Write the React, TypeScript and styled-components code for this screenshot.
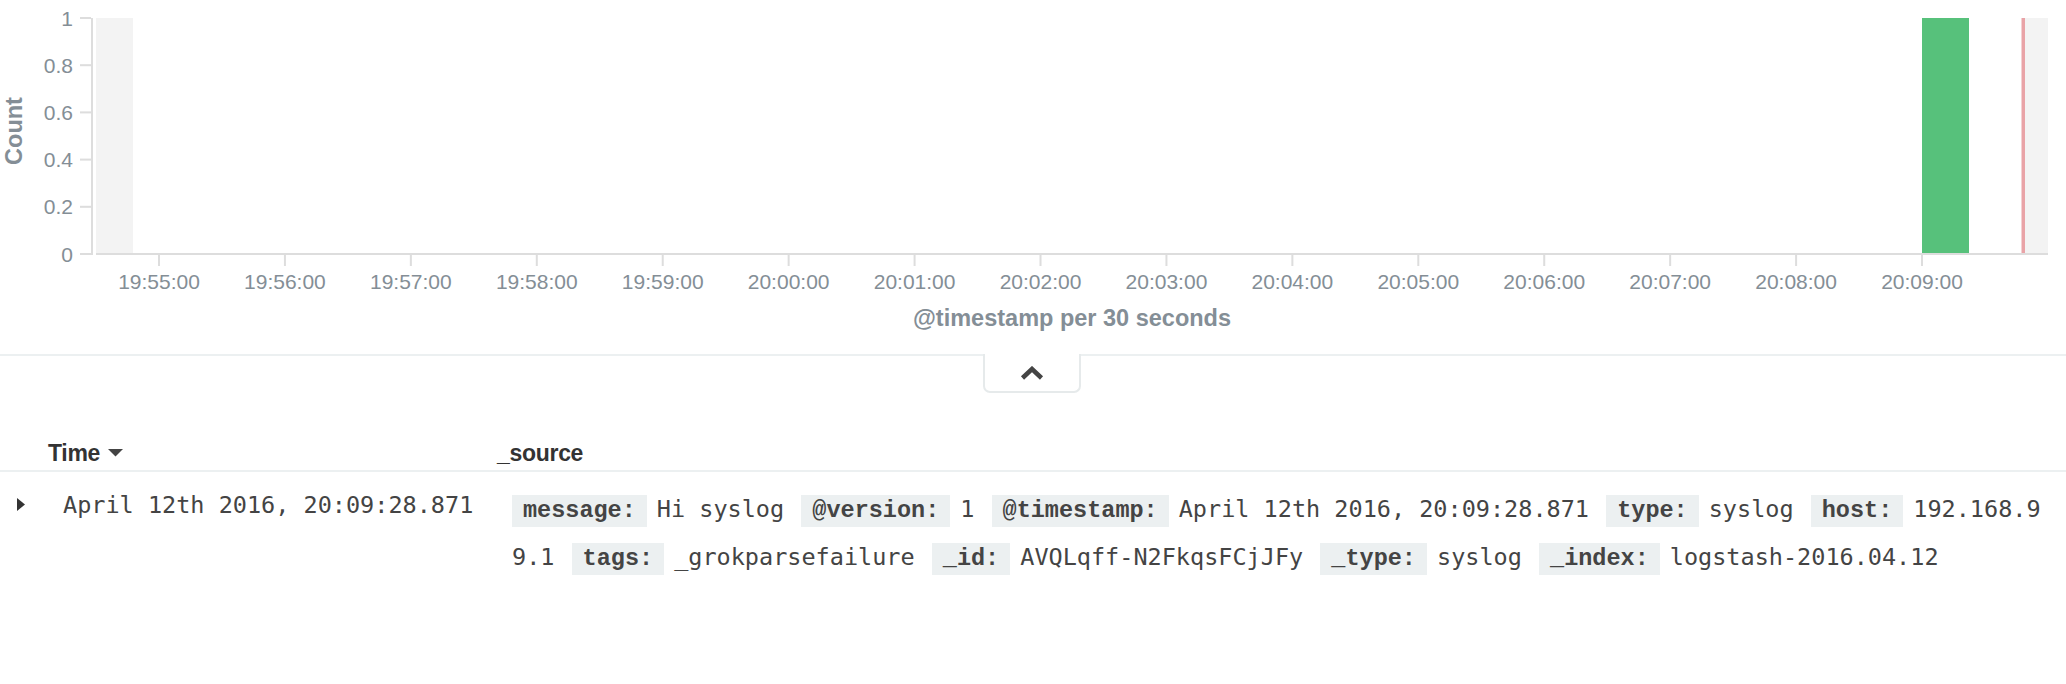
import React from 'react'
import styled, { createGlobalStyle } from 'styled-components'

const GlobalStyle = createGlobalStyle`
  html, body {
    margin: 0;
    padding: 0;
    background: #fff;
  }
  body {
    font-family: "Liberation Sans", Arial, sans-serif;
    color: #333;
  }
`

const Page = styled.div`
  width: 2066px;
  height: 684px;
  overflow: hidden;
`

/* ---------- histogram ---------- */

const Chart = styled.svg`
  display: block;
  width: 2066px;
  height: 354px;
  font-family: "Liberation Sans", Arial, sans-serif;
`

const TickLabel = styled.text`
  font-size: 21px;
  fill: #848e96;
`

const AxisTitle = styled.text`
  font-size: 23.5px;
  font-weight: 700;
  fill: #848e96;
`

const AXIS = '#dddddd'
const Y0 = 254
const Y1 = 18
const yFor = (v: number) => Y0 - v * (Y0 - Y1)
const xFor = (i: number) => 159 + i * 125.93

const yTicks = [1, 0.8, 0.6, 0.4, 0.2, 0]
const xTicks = [
  '19:55:00', '19:56:00', '19:57:00', '19:58:00', '19:59:00',
  '20:00:00', '20:01:00', '20:02:00', '20:03:00', '20:04:00',
  '20:05:00', '20:06:00', '20:07:00', '20:08:00', '20:09:00',
]

const Histogram = () => (
  <Chart viewBox="0 0 2066 354">
    {/* out of bounds shading */}
    <rect x={96} y={Y1} width={37} height={Y0 - Y1 - 1} fill="#f3f3f3" />
    <rect x={2025} y={Y1} width={23} height={Y0 - Y1 - 1} fill="#f3f3f3" />

    {/* data */}
    <rect x={1922} y={Y1} width={47} height={Y0 - Y1 - 1} fill="#57c17b" />
    <rect x={2021.5} y={Y1} width={3.5} height={Y0 - Y1 - 1} fill="#e9a3a7" />

    {/* y axis */}
    <rect x={91} y={Y1} width={2} height={Y0 - Y1 + 1} fill={AXIS} />
    {yTicks.map(v => (
      <g key={v}>
        <rect x={80} y={yFor(v) - 1} width={11} height={2} fill={AXIS} />
        <TickLabel x={73} y={yFor(v)} textAnchor="end" dominantBaseline="central">
          {v}
        </TickLabel>
      </g>
    ))}
    <AxisTitle
      x={0}
      y={0}
      textAnchor="middle"
      dominantBaseline="central"
      transform="translate(14 131) rotate(-90)"
    >
      Count
    </AxisTitle>

    {/* x axis */}
    <rect x={96} y={Y0 - 1} width={1952} height={2} fill={AXIS} />
    {xTicks.map((t, i) => (
      <g key={t}>
        <rect x={xFor(i) - 1} y={Y0} width={2} height={12} fill={AXIS} />
        <TickLabel x={xFor(i)} y={281} textAnchor="middle" dominantBaseline="central">
          {t}
        </TickLabel>
      </g>
    ))}
    <AxisTitle x={1072} y={318} textAnchor="middle" dominantBaseline="central">
      @timestamp per 30 seconds
    </AxisTitle>
  </Chart>
)

/* ---------- collapse toggle ---------- */

const Divider = styled.div`
  border-top: 2px solid #ecf0f1;
  display: flex;
  justify-content: center;
`

const ToggleTab = styled.button`
  margin: -2px 0 0 -2px;
  width: 98px;
  height: 39px;
  padding: 0;
  border: 2px solid #e6eaeb;
  border-top: none;
  border-radius: 0 0 7px 7px;
  background: #fff;
  display: flex;
  align-items: center;
  justify-content: center;
  cursor: pointer;
`

/* ---------- doc table ---------- */

const Table = styled.div`
  margin-top: 44px;
`

const HeaderRow = styled.div`
  display: grid;
  grid-template-columns: 48px 449px 1fr;
  border-bottom: 2px solid #ecf0f1;
  padding-bottom: 1px;
`

const HeaderCell = styled.div`
  display: flex;
  align-items: center;
  gap: 8px;
  font-size: 23px;
  line-height: 32px;
  font-weight: 700;
  color: #333;
  letter-spacing: -0.3px;
`

const DocRow = styled.div`
  display: grid;
  grid-template-columns: 48px 449px 1fr;
  color: #444;
  font-family: "DejaVu Sans Mono", "Liberation Mono", monospace;
  font-size: 23.5px;
`

const ToggleCell = styled.div`
  padding: 26px 0 0 17px;

  svg {
    display: block;
  }
`

const TimeCell = styled.div`
  padding: 9px 0 0 15px;
  line-height: 48px;
  white-space: nowrap;
`

const SourceCell = styled.dl`
  margin: 0;
  padding: 13px 16px 0 15px;
  line-height: 48px;
  word-break: break-all;
`

const Key = styled.dt`
  display: inline-block;
  font-family: "Liberation Mono", "DejaVu Sans Mono", monospace;
  font-weight: 700;
  font-size: 23.5px;
  line-height: 32px;
  padding: 0 11px;
  margin-right: 10px;
  background: #ecf0f1;
  color: #444;
  word-break: normal;
`

const Value = styled.dd`
  display: inline;
  margin: 0 3px 0 0;
`

const fields: [string, string][] = [
  ['message:', 'Hi syslog'],
  ['@version:', '1'],
  ['@timestamp:', 'April 12th 2016, 20:09:28.871'],
  ['type:', 'syslog'],
  ['host:', '192.168.99.1'],
  ['tags:', '_grokparsefailure'],
  ['_id:', 'AVQLqff-N2FkqsFCjJFy'],
  ['_type:', 'syslog'],
  ['_index:', 'logstash-2016.04.12'],
]

export default function App() {
  return (
    <Page>
      <GlobalStyle />
      <Histogram />
      <Divider>
        <ToggleTab aria-label="collapse chart">
          <svg width="24" height="14" viewBox="0 0 24 14">
            <path d="M2.5 12 L12 3 L21.5 12" fill="none" stroke="#444" strokeWidth="4.5" />
          </svg>
        </ToggleTab>
      </Divider>
      <Table>
        <HeaderRow>
          <HeaderCell />
          <HeaderCell>
            Time
            <svg width="15" height="8" viewBox="0 0 15 8">
              <path d="M0 0 H15 L7.5 7.5 Z" fill="#444" />
            </svg>
          </HeaderCell>
          <HeaderCell>_source</HeaderCell>
        </HeaderRow>
        <DocRow>
          <ToggleCell>
            <svg width="8" height="13" viewBox="0 0 8 13">
              <path d="M0 0 L8 6.5 L0 13 Z" fill="#333" />
            </svg>
          </ToggleCell>
          <TimeCell>April 12th 2016, 20:09:28.871</TimeCell>
          <SourceCell>
            {fields.map(([k, v]) => (
              <React.Fragment key={k}>
                <Key>{k}</Key>
                <Value>{v}</Value>{' '}
              </React.Fragment>
            ))}
          </SourceCell>
        </DocRow>
      </Table>
    </Page>
  )
}
